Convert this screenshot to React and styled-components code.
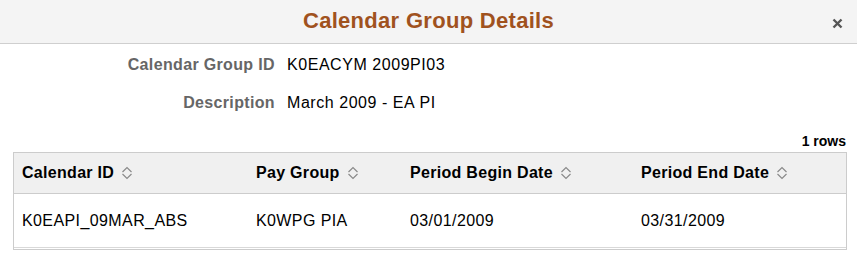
import React from "react";
import styled, { createGlobalStyle } from "styled-components";

const Global = createGlobalStyle`
  html, body { margin: 0; padding: 0; background: #fff; }
  body { font-family: "Liberation Sans", Arial, sans-serif; width: 857px; }
`;

const Page = styled.div`
  width: 857px;
  height: 263px;
  background: #fff;
  overflow: hidden;
`;

const Header = styled.div`
  position: relative;
  height: 43px;
  background: #f4f4f4;
  border-bottom: 1px solid #cfcfcf;
  display: flex;
  align-items: center;
  justify-content: center;
`;

const Title = styled.h1`
  margin: 0;
  font-size: 22px;
  font-weight: bold;
  letter-spacing: 0.3px;
  color: #a0521e;
  line-height: 1;
  transform: translateY(-1px);
`;

const Close = styled.button`
  position: absolute;
  right: 13px;
  top: 16px;
  width: 14px;
  height: 14px;
  padding: 0;
  border: 0;
  background: transparent;
  display: flex;
  align-items: center;
  justify-content: center;
`;

const Fields = styled.div`
  display: grid;
  grid-template-columns: 275px auto;
  column-gap: 12px;
  row-gap: 18px;
  padding-top: 11px;
`;

const Label = styled.div`
  text-align: right;
  font-size: 16px;
  font-weight: bold;
  color: #666;
  letter-spacing: 0.35px;
  line-height: 20px;
`;

const Value = styled.div`
  font-size: 16px;
  color: #000;
  letter-spacing: 0.55px;
  line-height: 20px;
`;

const RowCount = styled.div`
  text-align: right;
  padding-right: 11px;
  margin-top: 20px;
  font-size: 14px;
  font-weight: bold;
  color: #000;
  line-height: 16px;
`;

const Table = styled.div`
  margin: 3px 0 0 13px;
  width: 832px;
  border: 1px solid #cccccc;
  padding-bottom: 1px;
`;

const Grid = styled.div`
  display: grid;
  grid-template-columns: 234px 154px 231px 1fr;
`;

const HeadRow = styled(Grid)`
  height: 40px;
  background: #f0f0f0;
  border-bottom: 1px solid #cccccc;
`;

const BodyRow = styled(Grid)`
  height: 53px;
  border-bottom: 1px solid #d9d9d9;
`;

const HeadCell = styled.div`
  display: flex;
  align-items: center;
  gap: 7px;
  padding-left: 8px;
  font-size: 16px;
  font-weight: bold;
  color: #000;
  letter-spacing: 0.3px;
`;

const Cell = styled.div`
  display: flex;
  align-items: center;
  padding-left: 8px;
  font-size: 16px;
  color: #000;
  letter-spacing: 0.4px;
  padding-top: 1px;
`;

const SortIcon = () => (
  <svg width="12" height="14" viewBox="0 0 12 14" fill="none">
    <path d="M1.5 6 L6 1.5 L10.5 6" stroke="#8a8a8a" strokeWidth="1.2" />
    <path d="M1.5 8 L6 12.5 L10.5 8" stroke="#8a8a8a" strokeWidth="1.2" />
  </svg>
);

const columns = ["Calendar ID", "Pay Group", "Period Begin Date", "Period End Date"];
const rows = [["K0EAPI_09MAR_ABS", "K0WPG PIA", "03/01/2009", "03/31/2009"]];

export default function App() {
  return (
    <Page>
      <Global />
      <Header>
        <Title>Calendar Group Details</Title>
        <Close aria-label="Close">
          <svg width="11" height="11" viewBox="0 0 11 11">
            <path d="M1.5 1.5 L9.5 9.5 M9.5 1.5 L1.5 9.5" stroke="#555" strokeWidth="2.4" />
          </svg>
        </Close>
      </Header>
      <Fields>
        <Label>Calendar Group ID</Label>
        <Value>K0EACYM 2009PI03</Value>
        <Label>Description</Label>
        <Value>March 2009 - EA PI</Value>
      </Fields>
      <RowCount>1 rows</RowCount>
      <Table>
        <HeadRow>
          {columns.map((c) => (
            <HeadCell key={c}>
              {c}
              <SortIcon />
            </HeadCell>
          ))}
        </HeadRow>
        {rows.map((r, i) => (
          <BodyRow key={i}>
            {r.map((v, j) => (
              <Cell key={j}>{v}</Cell>
            ))}
          </BodyRow>
        ))}
      </Table>
    </Page>
  );
}
